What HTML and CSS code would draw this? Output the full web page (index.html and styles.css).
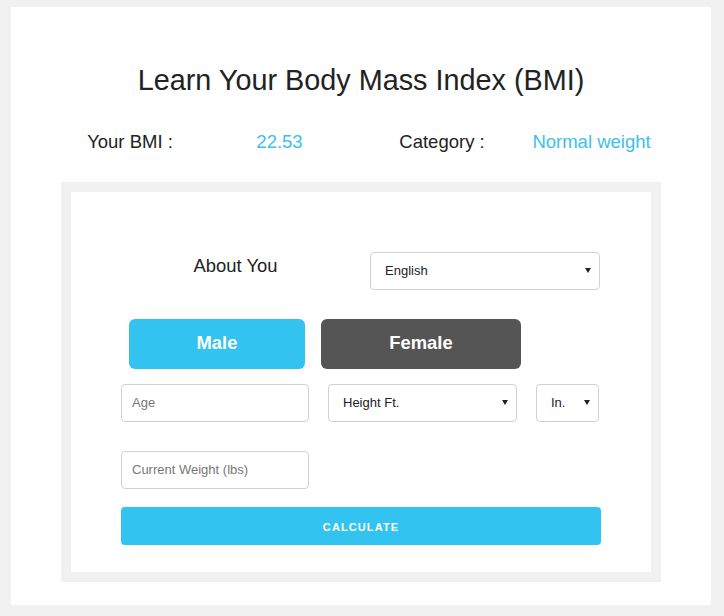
FILE: index.html
```html
<!DOCTYPE html>
<html lang="en">
<head>
<meta charset="utf-8">
<title>BMI Calculator</title>
<link rel="stylesheet" href="styles.css">
</head>
<body>
<div class="card">
  <h1 class="title">Learn Your Body Mass Index (BMI)</h1>
  <div class="stats">
    <span class="stat-label">Your BMI :</span>
    <span class="stat-value">22.53</span>
    <span class="stat-label">Category :</span>
    <span class="stat-value">Normal weight</span>
  </div>
  <div class="frame">
    <form class="form">
      <div class="about">
        <div class="about-label">About You</div>
        <div class="select-wrap lang">
          <select class="field select"><option>English</option></select>
        </div>
      </div>
      <div class="genders">
        <button type="button" class="gender male">Male</button>
        <button type="button" class="gender female">Female</button>
      </div>
      <div class="measures">
        <input class="field age" type="text" placeholder="Age">
        <div class="select-wrap ft">
          <select class="field select"><option>Height Ft.</option></select>
        </div>
        <div class="select-wrap inch">
          <select class="field select"><option>In.</option></select>
        </div>
      </div>
      <div class="weight-row">
        <input class="field weight" type="text" placeholder="Current Weight (lbs)">
      </div>
      <button type="button" class="calc">Calculate</button>
    </form>
  </div>
</div>
</body>
</html>
```
FILE: styles.css
```css
html, body {
  margin: 0;
  padding: 0;
}
body {
  background: #f1f1f1;
  font-family: "Liberation Sans", Arial, sans-serif;
  color: #222;
}
.card {
  margin: 7px 13px 0 11px;
  background: #fff;
  padding: 55px 50px 23px;
}
.title {
  margin: 0;
  font-size: 28.8px;
  font-weight: normal;
  line-height: 36px;
  text-align: center;
  color: #222;
}
.stats {
  display: grid;
  grid-template-columns: 138px 161px 164px 135px;
  margin-top: 32px;
  font-size: 18.5px;
  line-height: 24px;
  text-align: center;
}
.stat-label {
  color: #222;
}
.stat-value {
  color: #3dc0ec;
}
.frame {
  margin-top: 28px;
  border: 10px solid #f1f1f1;
  background: #fff;
  padding: 60px 50px 27px;
}
.form {
  width: 480px;
  margin: 0;
}
.about {
  display: flex;
  align-items: flex-start;
}
.about-label {
  width: 249px;
  box-sizing: border-box;
  padding: 2px 20px 0 0;
  text-align: center;
  font-size: 18.4px;
  line-height: 24px;
  color: #222;
}
.field {
  display: block;
  height: 38px;
  box-sizing: border-box;
  border: 1px solid #d1d1d1;
  border-radius: 4px;
  background: #fff;
  padding: 5px 10px 7px;
  font-family: "Liberation Sans", Arial, sans-serif;
  font-size: 13px;
  color: #222;
  margin: 0;
  outline: none;
}
.field::placeholder {
  color: #777;
}
.select {
  -webkit-appearance: none;
  appearance: none;
  width: 100%;
  padding-left: 14px;
  padding-right: 20px;
}
.select-wrap {
  position: relative;
}
.select-wrap::after {
  content: "";
  position: absolute;
  right: 9px;
  top: 16px;
  border-left: 3.5px solid transparent;
  border-right: 3.5px solid transparent;
  border-top: 5px solid #222;
  pointer-events: none;
}
.lang {
  width: 230px;
}
.genders {
  display: flex;
  gap: 16px;
  margin-top: 29px;
  padding-left: 8px;
}
.gender {
  height: 50px;
  border: none;
  border-radius: 6px;
  color: #fff;
  font-family: "Liberation Sans", Arial, sans-serif;
  font-size: 18.4px;
  font-weight: bold;
  padding: 0 0 2px;
}
.male {
  width: 176px;
  background: #33c3f0;
}
.female {
  width: 200px;
  background: #555;
}
.measures {
  display: flex;
  gap: 19px;
  margin-top: 15px;
}
.age {
  width: 188px;
}
.ft {
  width: 189px;
}
.inch {
  width: 63px;
}
.weight-row {
  margin-top: 29px;
}
.weight {
  width: 188px;
}
.calc {
  display: block;
  margin-top: 18px;
  width: 480px;
  height: 38px;
  border: none;
  border-radius: 4px;
  background: #33c3f0;
  color: #fff;
  font-family: "Liberation Sans", Arial, sans-serif;
  font-size: 11px;
  font-weight: bold;
  letter-spacing: 1.1px;
  text-transform: uppercase;
  padding: 2px 0 0;
}
```
